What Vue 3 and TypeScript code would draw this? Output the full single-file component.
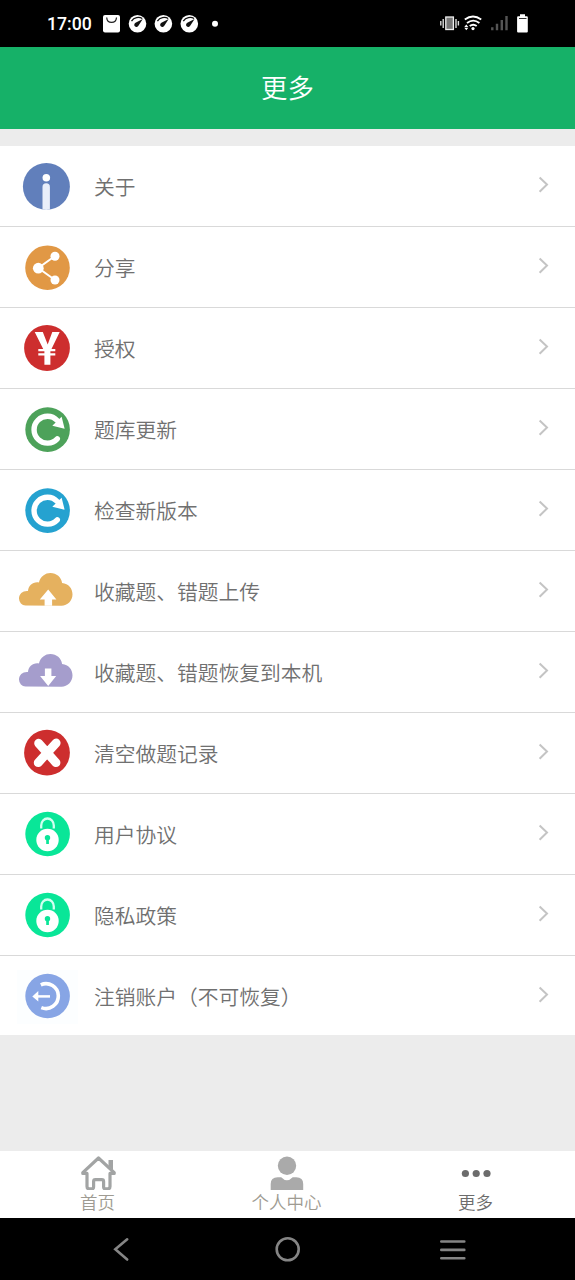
<script setup lang="ts">
type IconName = 'info' | 'share' | 'yen' | 'refresh' | 'upload' | 'download' | 'clear' | 'lock' | 'logout'

interface MenuItem {
  label: string
  icon: IconName
  color: string
}

const items: MenuItem[] = [
  { label: '关于', icon: 'info', color: '#617fbb' },
  { label: '分享', icon: 'share', color: '#e19845' },
  { label: '授权', icon: 'yen', color: '#cd2e2e' },
  { label: '题库更新', icon: 'refresh', color: '#4da25a' },
  { label: '检查新版本', icon: 'refresh', color: '#25a2d0' },
  { label: '收藏题、错题上传', icon: 'upload', color: '#e5b15f' },
  { label: '收藏题、错题恢复到本机', icon: 'download', color: '#a59dcc' },
  { label: '清空做题记录', icon: 'clear', color: '#cd2e2e' },
  { label: '用户协议', icon: 'lock', color: '#09e698' },
  { label: '隐私政策', icon: 'lock', color: '#09e698' },
  { label: '注销账户（不可恢复）', icon: 'logout', color: '#87a5e5' },
]
</script>

<template>
  <div class="screen">
    <div class="status">
      <span class="clock">17:00</span>
      <svg class="notices" width="124" height="47" viewBox="100 0 124 47">
        <rect x="103" y="15" width="17" height="17.5" rx="2" fill="#fff" />
        <path d="M106.7 17.5c.4 6.6 9.3 6.6 9.8 0" fill="none" stroke="#222" stroke-width="1.2" />
        <g v-for="x in [137.5, 163.4, 189.3]" :key="x" :transform="`translate(${x} 23.7)`">
          <circle r="8.8" fill="#fff" />
          <path d="M-6-2.6C-3.5-6.5 1.5-7.2 4.8-5.2" fill="none" stroke="#111" stroke-width="1.3" />
          <path d="M5.3-4.6L.9 2.1A2.2 2.2 0 1 1-2-.9Z" fill="#111" />
        </g>
        <circle cx="215" cy="23.7" r="3" fill="#fff" />
      </svg>
      <svg class="signals" width="95" height="47" viewBox="436 0 95 47">
        <rect x="445.8" y="17" width="7.6" height="12.5" fill="#777" stroke="#eee" stroke-width="1.3" />
        <path d="M443.2 19v9M456 19v9M440.8 21v4.5M458.4 21v4.5" stroke="#ddd" stroke-width="1.4" />
        <g fill="none" stroke="#fff" stroke-width="1.9">
          <path d="M464.8 19.5Q473 13.4 481.2 19.5" />
          <path d="M467 22.9Q473.2 18.3 479.4 22.9" />
          <path d="M469.7 26Q473.2 23.4 476.7 26" />
        </g>
        <circle cx="473" cy="28.6" r="1.6" fill="#fff" />
        <path d="M464.3 27l2-2.5 2 2.5ZM464.3 27.8l2 2.5 2-2.5Z" fill="#fff" />
        <path d="M492.3 27.2v3M497 23.8v6.4M501.8 20v10.2M506.5 16v14.2" stroke="#555" stroke-width="2.4" />
        <path d="M520 14.3h5v2h1.8a1 1 0 0 1 1 1v14.3a1 1 0 0 1-1 1h-8.7a1 1 0 0 1-1-1V17.3a1 1 0 0 1 1-1H520Z" fill="#fff" />
        <path d="M519 18.5h7.5" stroke="#333" stroke-width="1" />
      </svg>
    </div>

    <header class="header">更多</header>

    <main class="content">
      <ul class="menu">
        <li v-for="item in items" :key="item.label" class="row">
          <svg class="icon" width="94" height="80" viewBox="0 0 94 80" :fill="item.color">
            <template v-if="item.icon === 'info'">
              <circle cx="46.4" cy="40.4" r="23.5" />
              <circle cx="46.3" cy="31.7" r="3.8" fill="#fff" />
              <path d="M42.500 63.500V41a3.700 3.700 0 0 1 7.400 0v22.500q-3.700.8-7.400 0Z" fill="#e9eefa" />
            </template>
            <template v-else-if="item.icon === 'share'">
              <circle cx="47.5" cy="40.7" r="22.3" />
              <path d="M55 29L38.3 41 55 53" fill="none" stroke="#fff" stroke-width="2" />
              <g fill="#fff">
                <circle cx="38.3" cy="41.2" r="5.4" />
                <circle cx="55" cy="29.3" r="4.5" />
                <circle cx="55" cy="53" r="4.5" />
              </g>
            </template>
            <template v-else-if="item.icon === 'yen'">
              <circle cx="47" cy="40" r="22.9" />
              <path d="M34.7 24h8.1l4.9 12.5L52.3 24h7.4L51.500 41h3.800v2.200h-4.900v2h4.900v2.300h-4.900v9.300h-6v-9.300h-6.100v-2.300h6.100v-2h-6.100V41h4.900Z" fill="#fff" />
            </template>
            <template v-else-if="item.icon === 'refresh'">
              <circle cx="47.6" cy="40.6" r="22.3" />
              <path d="M57.2 31.5A13.4 13.4 0 1 0 57.3 49.8" fill="none" stroke="#fff" stroke-width="5.4" stroke-linecap="round" />
              <path d="M61.6 27.8l3 12-12.3-3.1Z" fill="#fff" />
            </template>
            <template v-else-if="item.icon === 'upload' || item.icon === 'download'">
              <path d="M25.5 54.5A6.7 7 0 0 1 19 47.5C19 42.8 23 39.6 28 40.1C28.4 34.3 33 30.5 38.9 31.4C40.6 25.5 45.2 22.1 50.4 22.1C56.6 22.1 61.3 26.3 62.1 32C68.6 32.7 72.5 37.5 72.5 43.3C72.5 50 67.5 54.7 61.5 54.7Z" />
              <path v-if="item.icon === 'upload'" d="M48.2 38.5l8.2 10h-4.3v6.3h-7.5v-6.3h-4.8Z" fill="#fff" />
              <path v-else d="M44.9 36.5h6.5v7.6h4.8l-8 9.8-8.1-9.8h4.8Z" fill="#fff" />
            </template>
            <template v-else-if="item.icon === 'clear'">
              <circle cx="47" cy="39.7" r="22.9" />
              <path d="M38.6 30.2L56 49.7M56.2 30L38.2 49.7" stroke="#fff" stroke-width="8.8" stroke-linecap="round" />
            </template>
            <template v-else-if="item.icon === 'lock'">
              <circle cx="47.6" cy="40" r="22.3" />
              <path d="M41.2 34.5v-3a6.3 7 0 0 1 12.6 0v3" fill="none" stroke="#d2fff0" stroke-width="2.3" />
              <circle cx="47.5" cy="46" r="11.2" fill="#fff" />
              <circle cx="47.5" cy="43.7" r="2.7" />
              <path d="M46.2 45h2.7v5h-2.7Z" />
            </template>
            <template v-else>
              <rect x="17" y="14" width="61" height="54" fill="#fcfeff" />
              <circle cx="47.6" cy="40" r="22.3" />
              <path d="M40.8 28.8A12.4 12.4 0 1 1 41.3 51.6" fill="none" stroke="#fff" stroke-width="3.6" />
              <path d="M37 40.4h13" stroke="#fff" stroke-width="2.5" />
              <path d="M32.3 40.4l6-5.4v10.6Z" fill="#fff" />
            </template>
          </svg>
          <span class="label">{{ item.label }}</span>
          <svg class="chevron" width="12" height="18" viewBox="0 0 12 18">
            <path d="M1.6 1.5L9 8.5 1.6 15.7" />
          </svg>
        </li>
      </ul>
    </main>

    <nav class="tabs">
      <div class="tab">
        <svg width="40" height="39" viewBox="0 1 40 39">
          <path d="M30.500 10h4.500v10l-4.500-4Z" fill="#a2a4a4" />
          <path d="M20.500 8L4.800 22.600v.8H9V36.500q0 2.300 2.300 2.300h2.600q1.700 0 1.700-1.700v-5.600q0-1.800 1.800-1.800h6.400q1.800 0 1.800 1.800v5.600q0 1.700 1.700 1.700h2.400q2.300 0 2.300-2.300V23.400h4.200v-.8Z" fill="none" stroke="#a2a4a4" stroke-width="3.2" stroke-linejoin="round" />
        </svg>
        <span>首页</span>
      </div>
      <div class="tab">
        <svg width="40" height="39" viewBox="0 1 40 39" fill="#aaa">
          <circle cx="20" cy="15.8" r="9.2" />
          <path d="M3.700 40.300V34q0-6.700 7-6.700h3.500q5.700 6 11.500 0h3.500q7 0 7 6.700v6.300Z" />
        </svg>
        <span>个人中心</span>
      </div>
      <div class="tab active">
        <svg width="40" height="39" viewBox="0 1 40 39" fill="#6c6c6c">
          <circle cx="9.4" cy="23.5" r="3.6" />
          <circle cx="20.2" cy="23.5" r="3.6" />
          <circle cx="31" cy="23.5" r="3.6" />
        </svg>
        <span>更多</span>
      </div>
    </nav>

    <div class="system">
      <svg width="575" height="62" viewBox="0 0 575 62" fill="none" stroke="#858585" stroke-width="2.6" stroke-linecap="round">
        <path d="M127.2 21.3L115.3 31.3 127.2 41.5" />
        <circle cx="287.7" cy="31.3" r="11" />
        <path d="M441.3 23.5h23M441.3 31.9h23M441.3 40.3h23" />
      </svg>
    </div>
  </div>
</template>

<style>
body {
  margin: 0;
  background: #000;
}
</style>

<style scoped>
.screen {
  display: flex;
  flex-direction: column;
  width: 575px;
  height: 1280px;
  overflow: hidden;
  background: #ececec;
  color: #707070;
  font-family: "Noto Sans CJK SC DemiLight", "Noto Sans CJK SC", sans-serif;
  font-weight: 350;
}
.screen svg {
  display: block;
  flex: none;
}
.status {
  display: flex;
  align-items: center;
  height: 47px;
  padding: 0 44px 0 47px;
  background: #000;
  color: #fff;
}
.clock {
  width: 53px;
  font: 500 17.7px/48px Roboto, sans-serif;
}
.signals {
  margin-left: auto;
}
.header {
  height: 82px;
  background: #16b168;
  color: #fff;
  font-size: 26.4px;
  line-height: 80px;
  text-align: center;
}
.content {
  flex: 1;
  padding-top: 17px;
}
.menu {
  margin: 0;
  padding: 0;
  list-style: none;
  background: #fff;
}
.row {
  display: flex;
  align-items: center;
  box-sizing: border-box;
  height: 81px;
  padding-right: 25px;
  border-bottom: 1px solid #d9d9d9;
}
.row:last-child {
  height: 79px;
  border-bottom: 0;
}
.row:last-child .icon {
  align-self: flex-start;
}
.label {
  flex: 1;
  font-size: 20.75px;
  line-height: 80px;
  white-space: nowrap;
}
.chevron {
  margin-bottom: 2px;
  fill: none;
  stroke: #c4c4c4;
  stroke-width: 2;
}
.tabs {
  display: flex;
  justify-content: space-between;
  height: 67px;
  padding: 0 5px 0 3px;
  background: #fff;
}
.tab {
  display: flex;
  flex-direction: column;
  align-items: center;
  width: 189px;
  color: #9e9b92;
  font-size: 17.5px;
  line-height: 24px;
}
.tab.active {
  color: #6c6c6c;
}
.system {
  height: 62px;
  background: #000;
}
</style>
